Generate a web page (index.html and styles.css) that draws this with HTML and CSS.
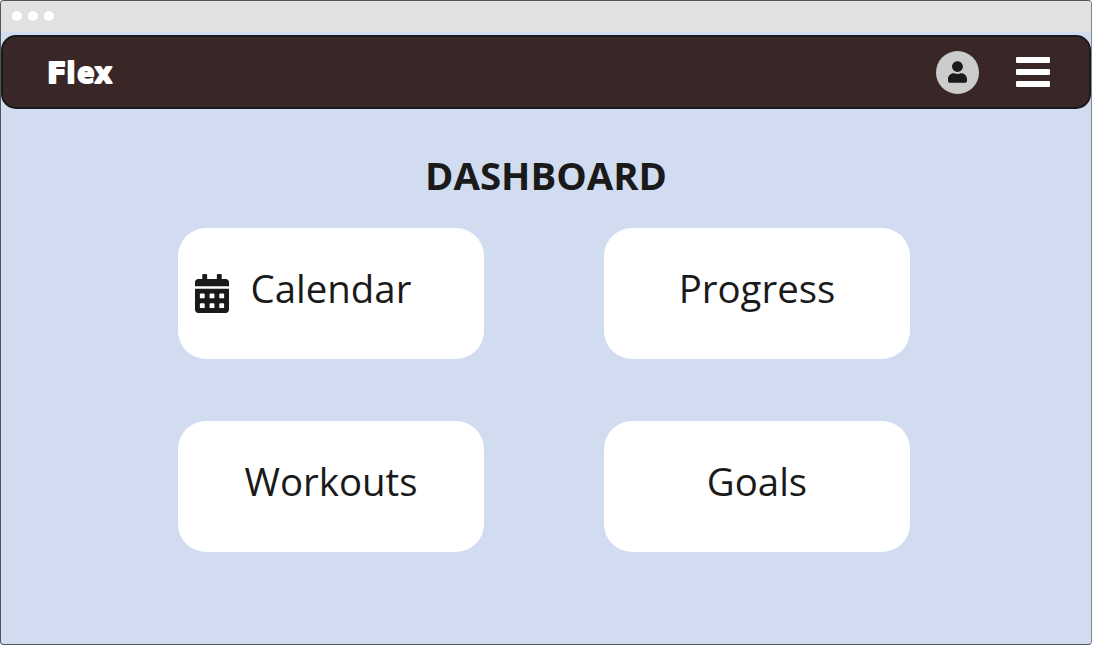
FILE: index.html
```html
<!DOCTYPE html>
<html lang="en">
<head>
<meta charset="utf-8">
<title>Flex</title>
<link rel="stylesheet" href="styles.css">
</head>
<body>
<div class="window">
  <div class="titlebar"><i class="dot"></i><i class="dot"></i><i class="dot"></i></div>
  <header class="navbar">
    <svg class="brand" viewBox="0 0 72 40"><text y="31.300"><tspan class="brand-initial" x="1.200">F</tspan><tspan x="20.400 31.300 49">lex</tspan></text></svg>
    <div class="avatar">
      <svg class="user-icon" viewBox="0 0 448 512"><path d="M224 256c70.700 0 128-57.300 128-128S294.700 0 224 0 96 57.300 96 128s57.300 128 128 128zm89.600 32h-16.700c-22.200 10.200-46.900 16-72.900 16s-50.600-5.800-72.900-16h-16.700C60.200 288 0 348.200 0 422.400V464c0 26.500 21.500 48 48 48h352c26.500 0 48-21.500 48-48v-41.600c0-74.200-60.200-134.400-134.400-134.400z"/></svg>
    </div>
    <svg class="menu-icon" viewBox="0 0 34 30"><rect width="34" height="6" rx="1"/><rect y="12" width="34" height="6" rx="1"/><rect y="24" width="34" height="6" rx="1"/></svg>
  </header>
  <main class="content">
    <h1 class="title">DASHBOARD</h1>
    <div class="cards">
      <div class="card card-with-icon">
        <svg class="calendar-icon" viewBox="0 0 448 512"><path fill-rule="evenodd" d="M0 192H448V464a48 48 0 0 1-48 48H48a48 48 0 0 1-48-48zM76 256a12 12 0 0 0-12 12v40a12 12 0 0 0 12 12h40a12 12 0 0 0 12-12v-40a12 12 0 0 0-12-12zM204 256a12 12 0 0 0-12 12v40a12 12 0 0 0 12 12h40a12 12 0 0 0 12-12v-40a12 12 0 0 0-12-12zM332 256a12 12 0 0 0-12 12v40a12 12 0 0 0 12 12h40a12 12 0 0 0 12-12v-40a12 12 0 0 0-12-12zM76 384a12 12 0 0 0-12 12v40a12 12 0 0 0 12 12h40a12 12 0 0 0 12-12v-40a12 12 0 0 0-12-12zM204 384a12 12 0 0 0-12 12v40a12 12 0 0 0 12 12h40a12 12 0 0 0 12-12v-40a12 12 0 0 0-12-12zM332 384a12 12 0 0 0-12 12v40a12 12 0 0 0 12 12h40a12 12 0 0 0 12-12v-40a12 12 0 0 0-12-12zM448 160H0v-48a48 48 0 0 1 48-48H96V12a12 12 0 0 1 12-12h40a12 12 0 0 1 12 12V64H288V12a12 12 0 0 1 12-12h40a12 12 0 0 1 12 12V64h48a48 48 0 0 1 48 48z"/></svg>
        <span>Calendar</span>
      </div>
      <div class="card"><span>Progress</span></div>
      <div class="card"><span>Workouts</span></div>
      <div class="card"><span>Goals</span></div>
    </div>
  </main>
</div>
</body>
</html>
```
FILE: styles.css
```css
* { box-sizing: border-box; }
body {
  margin: 0;
  background: #fff;
  color: #1a1a1a;
  font-family: "Open Sans", sans-serif;
}
.window {
  width: 1092px;
  height: 645px;
  border: 1px solid #555;
  border-right-color: #83868c;
  border-radius: 4px;
  background: #d2dcf0;
  overflow: hidden;
}
.titlebar {
  display: flex;
  align-items: center;
  gap: 6px;
  height: 31px;
  padding: 0 11px 1px 10.500px;
  background: #e1e1e1;
}
.dot {
  width: 10px;
  height: 10px;
  border-radius: 50%;
  background: #fff;
}
.navbar {
  display: flex;
  align-items: center;
  height: 74px;
  margin-top: 3px;
  padding: 0 39px 0 43px;
  border: 2px solid #1a1a1a;
  border-radius: 15px;
  background: #392727;
}
.brand {
  width: 72px;
  height: 40px;
  margin-right: auto;
  fill: #fff;
  stroke: #fff;
  stroke-width: 2px;
  stroke-linejoin: round;
  font-size: 29px;
  font-weight: 700;
}
.brand-initial { font-family: "DejaVu Sans", sans-serif; font-size: 28px; }
.avatar {
  display: flex;
  align-items: center;
  justify-content: center;
  width: 43px;
  height: 43px;
  margin-right: 37px;
  border-radius: 50%;
  background: #ccc;
}
.user-icon { width: 19px; height: 22px; fill: #1a1a1a; }
.menu-icon { width: 34px; height: 30px; fill: #fff; }
.content { padding-top: 39px; }
.title {
  margin: 0;
  font-size: 38.400px;
  font-weight: 700;
  line-height: 54px;
  text-align: center;
}
.cards {
  display: grid;
  grid-template-columns: 306px 306px;
  grid-auto-rows: 131px;
  gap: 62px 120px;
  margin: 25.600px 0 0 177px;
}
.card {
  display: flex;
  justify-content: center;
  padding-top: 33px;
  border-radius: 28px;
  background: #fff;
  font-size: 38.400px;
  line-height: 54px;
}
.card-with-icon {
  justify-content: flex-start;
  gap: 21.500px;
  padding-left: 17px;
}
.calendar-icon {
  width: 34px;
  height: 39px;
  margin-top: 13px;
  fill: #1a1a1a;
}
```
